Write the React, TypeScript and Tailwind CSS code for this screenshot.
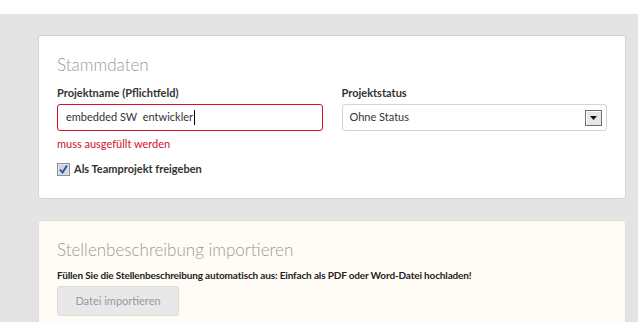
import React from "react";

function Checkbox() {
  return (
    <svg width="13" height="13" viewBox="0 0 13 13" className="shrink-0">
      <rect x="0.5" y="0.5" width="12" height="12" fill="#dfe3ea" stroke="#8a8f99" />
      <rect x="2" y="2" width="9" height="9" fill="#cfd6e2" />
      <path d="M3 6.5 L5.5 9.5 L10 2.5" fill="none" stroke="#2a4aa0" strokeWidth="1.8" />
    </svg>
  );
}

function SelectArrow() {
  return (
    <div className="flex h-[16px] w-[17px] items-center justify-center border border-[#6e6e6e] bg-[#e6e6e6] shadow-[inset_1px_1px_0_#fff]">
      <svg width="7" height="4" viewBox="0 0 7 4">
        <path d="M0 0 H7 L3.5 4 Z" fill="#111" />
      </svg>
    </div>
  );
}

export default function App() {
  return (
    <div className="h-[322px] w-[638px] overflow-hidden bg-white font-['Lato','Open_Sans',sans-serif]">
      <div className="mt-[14px] h-[308px] bg-[#e4e4e4] pl-[38px] pr-[12px] pt-[21px]">
        <div className="h-[164px] rounded-[3px] border border-[#d4d4d4] bg-white px-[18px] pt-[18px]">
          <h2 className="text-[17px] font-light leading-[22px] text-[#9a9a9a]">Stammdaten</h2>
          <div className="mt-[9px] grid grid-cols-2 gap-[19px]">
            <div>
              <label className="block text-[11px] font-bold leading-[16px] text-[#333]">
                Projektname (Pflichtfeld)
              </label>
              <div className="mt-[3px] flex h-[27px] items-center rounded-[3px] border border-[#d0112b] px-[8px] text-[11px] text-[#333]">
                embedded SW&nbsp; entwickler<span className="ml-px h-[15px] w-px bg-black" />
              </div>
              <p className="mt-[5px] text-[11px] leading-[16px] text-[#d0112b]">muss ausgefüllt werden</p>
            </div>
            <div>
              <label className="block text-[11px] font-bold leading-[16px] text-[#333]">Projektstatus</label>
              <div className="mt-[3px] flex h-[27px] items-center justify-between rounded-[3px] border border-[#d4d4d4] pl-[7px] pr-[4px] text-[11px] text-[#333]">
                <span>Ohne Status</span>
                <SelectArrow />
              </div>
            </div>
          </div>
          <div className="mt-[9px] flex items-center gap-[4px]">
            <Checkbox />
            <span className="text-[11px] font-bold text-[#333]">Als Teamprojekt freigeben</span>
          </div>
        </div>
        <div className="mt-[21px] h-[120px] rounded-[3px] border border-[#e0ddd4] bg-[#fffcf5] px-[18px] pt-[18px]">
          <h2 className="text-[17px] font-light leading-[22px] text-[#9a9a9a]">Stellenbeschreibung importieren</h2>
          <p className="mt-[6px] text-[10px] font-bold leading-[16px] tracking-[-0.15px] text-[#222]">
            Füllen Sie die Stellenbeschreibung automatisch aus: Einfach als PDF oder Word-Datei hochladen!
          </p>
          <button className="mt-[3px] h-[30px] w-[122px] rounded-[3px] border border-[#dcdcdc] bg-[#e8e8e8] text-[11px] text-[#9a9a9a]">
            Datei importieren
          </button>
        </div>
      </div>
    </div>
  );
}
